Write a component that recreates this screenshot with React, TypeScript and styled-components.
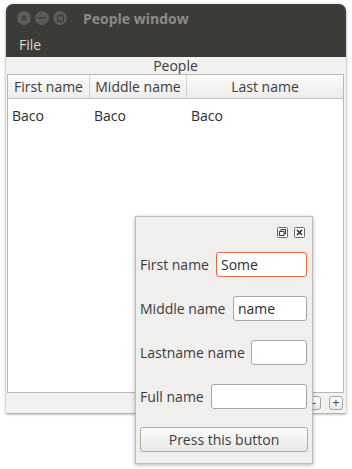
import styled, { createGlobalStyle } from 'styled-components';

const Global = createGlobalStyle`
  html, body {
    margin: 0;
    padding: 0;
    background: #ffffff;
  }
  body {
    font-family: "Open Sans", "DejaVu Sans", sans-serif;
  }
`;

const Page = styled.div`
  position: relative;
  width: 352px;
  height: 469px;
  overflow: hidden;
  padding: 4px 0 0 6px;
  box-sizing: border-box;
`;

const Window = styled.div`
  width: 340px;
  height: 409px;
  display: flex;
  flex-direction: column;
  border-radius: 7px 7px 0 0;
  overflow: hidden;
  background: #f2f1f0;
  box-shadow: 0 1px 3px rgba(0, 0, 0, 0.45);
`;

const TitleBar = styled.div`
  height: 28px;
  background: #3c3b37;
  display: flex;
  align-items: center;
  padding-left: 11px;
  gap: 4px;
`;

const TitleButton = styled.div`
  width: 14px;
  height: 14px;
  border-radius: 50%;
  background: #5c5b56;
  display: flex;
  align-items: center;
  justify-content: center;
`;

const TitleText = styled.div`
  margin-left: 12px;
  color: #8b8a85;
  font-weight: bold;
  font-size: 14px;
`;

const MenuBar = styled.div`
  height: 25px;
  background: #3c3b37;
  display: flex;
  align-items: center;
  padding-left: 13px;
  color: #dfdbd2;
  font-size: 14px;
`;

const Body = styled.div`
  flex: 1;
  display: flex;
  flex-direction: column;
  padding: 0 2px 0 1px;
`;

const Caption = styled.div`
  height: 17px;
  line-height: 17px;
  text-align: center;
  font-size: 14px;
  color: #3c3c3c;
`;

const Table = styled.div`
  flex: 1;
  background: #ffffff;
  border: 1px solid #b9b7b3;
  display: flex;
  flex-direction: column;
`;

const HeaderRow = styled.div`
  display: grid;
  grid-template-columns: 82px 97px 1fr;
  height: 23px;
  background: linear-gradient(#fbfbfa, #eeedec);
  border-bottom: 1px solid #c4c2bf;
`;

const HeaderCell = styled.div`
  font-size: 14px;
  color: #3c3c3c;
  line-height: 23px;
  text-align: center;
  border-right: 1px solid #d6d4d1;
  &:last-child {
    border-right: none;
  }
`;

const DataRow = styled.div`
  display: grid;
  grid-template-columns: 82px 97px 1fr;
  height: 26px;
  align-items: end;
`;

const DataCell = styled.div`
  font-size: 14px;
  color: #2c2c2c;
  padding-left: 4px;
`;

const BottomBar = styled.div`
  height: 20px;
  display: flex;
  align-items: center;
  justify-content: flex-end;
  gap: 8px;
  padding-right: 1px;
`;

const SmallButton = styled.div`
  width: 12px;
  height: 12px;
  border: 1px solid #a8a6a2;
  border-radius: 3px;
  background: linear-gradient(#ffffff, #ebeae8);
  font-size: 12px;
  line-height: 11px;
  text-align: center;
  color: #3c3c3c;
`;

const Dock = styled.div`
  position: absolute;
  left: 135px;
  top: 216px;
  width: 178px;
  height: 248px;
  box-sizing: border-box;
  background: #f0efee;
  border: 1px solid #bdbbb7;
  box-shadow: 0 1px 4px rgba(0, 0, 0, 0.3);
  display: flex;
  flex-direction: column;
  padding: 10px 5px 0 4px;
`;

const DockTools = styled.div`
  display: flex;
  justify-content: flex-end;
  gap: 6px;
  height: 12px;
  padding-right: 2px;
`;

const Form = styled.div`
  display: flex;
  flex-direction: column;
  gap: 19px;
  margin-top: 13px;
`;

const FieldRow = styled.div`
  display: flex;
  align-items: center;
  justify-content: space-between;
`;

const Label = styled.label`
  font-size: 14px;
  color: #3c3c3c;
`;

const Field = styled.input<{ $w: number; $focus?: boolean }>`
  width: ${(p) => p.$w}px;
  height: 25px;
  box-sizing: border-box;
  border: 1px solid ${(p) => (p.$focus ? '#dd6e3e' : '#a7a5a1')};
  border-radius: 3px;
  padding: 0 4px;
  font-family: "Open Sans", "DejaVu Sans", sans-serif;
  font-size: 14px;
  color: #2c2c2c;
  background: #ffffff;
  outline: none;
`;

const PushButton = styled.button`
  width: 168px;
  height: 25px;
  margin-top: -1px;
  border: 1px solid #aeaca8;
  border-radius: 3px;
  background: linear-gradient(#fbfbfa, #e9e8e6);
  font-family: "Open Sans", "DejaVu Sans", sans-serif;
  font-size: 14px;
  color: #3c3c3c;
  padding: 0;
`;

const Icon = styled.svg`
  display: block;
`;

function CloseGlyph() {
  return (
    <Icon width="6" height="6" viewBox="0 0 6 6">
      <path d="M1 1L5 5M5 1L1 5" stroke="#3c3b37" strokeWidth="1.3" />
    </Icon>
  );
}

function MinGlyph() {
  return (
    <Icon width="8" height="2" viewBox="0 0 8 2">
      <rect x="0" y="0.3" width="8" height="1.4" fill="#3c3b37" />
    </Icon>
  );
}

function MaxGlyph() {
  return (
    <Icon width="7" height="7" viewBox="0 0 7 7">
      <rect x="0.6" y="0.6" width="5.8" height="5.8" fill="none" stroke="#3c3b37" strokeWidth="1.1" />
    </Icon>
  );
}

function FloatIcon() {
  return (
    <Icon width="11" height="11" viewBox="0 0 11 11">
      <rect x="0.5" y="0.5" width="10" height="10" rx="1" fill="#f7f7f6" stroke="#6c6a66" />
      <rect x="4" y="2.5" width="4.5" height="4" fill="none" stroke="#3c3c3c" />
      <rect x="2.5" y="4.5" width="4.5" height="4" fill="#f7f7f6" stroke="#3c3c3c" />
    </Icon>
  );
}

function DockCloseIcon() {
  return (
    <Icon width="11" height="11" viewBox="0 0 11 11">
      <rect x="0.5" y="0.5" width="10" height="10" rx="1" fill="#f7f7f6" stroke="#6c6a66" />
      <path d="M3 3L8 8M8 3L3 8" stroke="#2c2c2c" strokeWidth="1.6" />
    </Icon>
  );
}

const people = [{ first: 'Baco', middle: 'Baco', last: 'Baco' }];

export default function App() {
  return (
    <Page>
      <Global />
      <Window>
        <TitleBar>
          <TitleButton>
            <CloseGlyph />
          </TitleButton>
          <TitleButton>
            <MinGlyph />
          </TitleButton>
          <TitleButton>
            <MaxGlyph />
          </TitleButton>
          <TitleText>People window</TitleText>
        </TitleBar>
        <MenuBar>File</MenuBar>
        <Body>
          <Caption>People</Caption>
          <Table>
            <HeaderRow>
              <HeaderCell>First name</HeaderCell>
              <HeaderCell>Middle name</HeaderCell>
              <HeaderCell>Last name</HeaderCell>
            </HeaderRow>
            {people.map((p, i) => (
              <DataRow key={i}>
                <DataCell>{p.first}</DataCell>
                <DataCell>{p.middle}</DataCell>
                <DataCell>{p.last}</DataCell>
              </DataRow>
            ))}
          </Table>
          <BottomBar>
            <SmallButton>-</SmallButton>
            <SmallButton>+</SmallButton>
          </BottomBar>
        </Body>
      </Window>

      <Dock>
        <DockTools>
          <FloatIcon />
          <DockCloseIcon />
        </DockTools>
        <Form>
          <FieldRow>
            <Label>First name</Label>
            <Field $w={91} $focus defaultValue="Some" />
          </FieldRow>
          <FieldRow>
            <Label>Middle name</Label>
            <Field $w={74} defaultValue="name" />
          </FieldRow>
          <FieldRow>
            <Label>Lastname name</Label>
            <Field $w={56} />
          </FieldRow>
          <FieldRow>
            <Label>Full name</Label>
            <Field $w={96} />
          </FieldRow>
          <PushButton>Press this button</PushButton>
        </Form>
      </Dock>
    </Page>
  );
}
